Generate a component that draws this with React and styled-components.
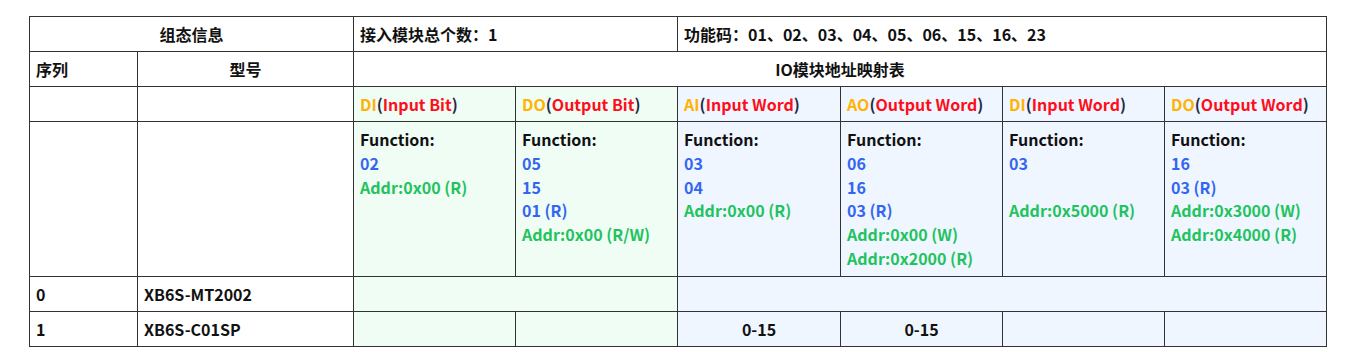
import React from "react";
import styled, { createGlobalStyle } from "styled-components";

const Global = createGlobalStyle`
  html, body { margin: 0; padding: 0; background: #ffffff; }
  body { font-family: "Noto Sans CJK SC", "Noto Sans", sans-serif; }
`;

const Page = styled.div`
  padding: 16px 0 0 29px;
`;

const Table = styled.table`
  border-collapse: collapse;
  table-layout: fixed;
  width: 1297px;
  font-size: 16px;
  font-weight: 700;
  color: #111111;
`;

const Cell = styled.td`
  border: 1px solid #333333;
  padding: 0 6px;
  height: 35px;
  box-sizing: border-box;
  line-height: 24px;
  vertical-align: middle;
  white-space: nowrap;
  text-align: ${(p) => (p.$center ? "center" : "left")};
  background: ${(p) =>
    p.$tone === "green" ? "#f0fdf4" : p.$tone === "blue" ? "#eff6ff" : "#ffffff"};
`;

const FuncCell = styled(Cell)`
  vertical-align: top;
  padding: 6px 6px 2px;
  height: 155px;
`;

const Line = styled.div`
  height: 23.8px;
  line-height: 23.8px;
  color: ${(p) => (p.$kind === "code" ? "#3366f0" : p.$kind === "addr" ? "#22c35e" : "#111111")};
`;

const Short = styled.span`
  color: #ffb300;
`;
const Paren = styled.span`
  color: #1e2a44;
`;
const Long = styled.span`
  color: #ff0d1a;
`;

const Head = ({ s, l }) => (
  <>
    <Short>{s}</Short>
    <Paren>(</Paren>
    <Long>{l}</Long>
    <Paren>)</Paren>
  </>
);

const widths = [108, 216, 162, 162, 163, 162, 162, 162];

const headers = [
  { s: "DI", l: "Input Bit", tone: "green" },
  { s: "DO", l: "Output Bit", tone: "green" },
  { s: "AI", l: "Input Word", tone: "blue" },
  { s: "AO", l: "Output Word", tone: "blue" },
  { s: "DI", l: "Input Word", tone: "blue" },
  { s: "DO", l: "Output Word", tone: "blue" },
];

const funcs = [
  { tone: "green", lines: [["code", "02"], ["addr", "Addr:0x00 (R)"]] },
  { tone: "green", lines: [["code", "05"], ["code", "15"], ["code", "01 (R)"], ["addr", "Addr:0x00 (R/W)"]] },
  { tone: "blue", lines: [["code", "03"], ["code", "04"], ["addr", "Addr:0x00 (R)"]] },
  { tone: "blue", lines: [["code", "06"], ["code", "16"], ["code", "03 (R)"], ["addr", "Addr:0x00 (W)"], ["addr", "Addr:0x2000 (R)"]] },
  { tone: "blue", lines: [["code", "03"], ["code", ""], ["addr", "Addr:0x5000 (R)"]] },
  { tone: "blue", lines: [["code", "16"], ["code", "03 (R)"], ["addr", "Addr:0x3000 (W)"], ["addr", "Addr:0x4000 (R)"]] },
];

const lastRow = [
  { tone: "green", v: "" },
  { tone: "green", v: "" },
  { tone: "blue", v: "0-15" },
  { tone: "blue", v: "0-15" },
  { tone: "blue", v: "" },
  { tone: "blue", v: "" },
];

export default function App() {
  return (
    <Page>
      <Global />
      <Table>
        <colgroup>
          {widths.map((w, i) => (
            <col key={i} style={{ width: w }} />
          ))}
        </colgroup>
        <tbody>
          <tr>
            <Cell colSpan={2} $center>组态信息</Cell>
            <Cell colSpan={2}>接入模块总个数：1</Cell>
            <Cell colSpan={4}>功能码：01、02、03、04、05、06、15、16、23</Cell>
          </tr>
          <tr>
            <Cell>序列</Cell>
            <Cell $center>型号</Cell>
            <Cell colSpan={6} $center>IO模块地址映射表</Cell>
          </tr>
          <tr>
            <Cell />
            <Cell />
            {headers.map((h, i) => (
              <Cell key={i} $tone={h.tone}>
                <Head s={h.s} l={h.l} />
              </Cell>
            ))}
          </tr>
          <tr>
            <Cell />
            <Cell />
            {funcs.map((f, i) => (
              <FuncCell key={i} $tone={f.tone}>
                <Line>Function:</Line>
                {f.lines.map(([k, t], j) => (
                  <Line key={j} $kind={k}>{t}</Line>
                ))}
              </FuncCell>
            ))}
          </tr>
          <tr>
            <Cell>0</Cell>
            <Cell>XB6S-MT2002</Cell>
            <Cell colSpan={2} $tone="green" />
            <Cell colSpan={4} $tone="blue" />
          </tr>
          <tr>
            <Cell>1</Cell>
            <Cell>XB6S-C01SP</Cell>
            {lastRow.map((c, i) => (
              <Cell key={i} $tone={c.tone} $center>{c.v}</Cell>
            ))}
          </tr>
        </tbody>
      </Table>
    </Page>
  );
}
